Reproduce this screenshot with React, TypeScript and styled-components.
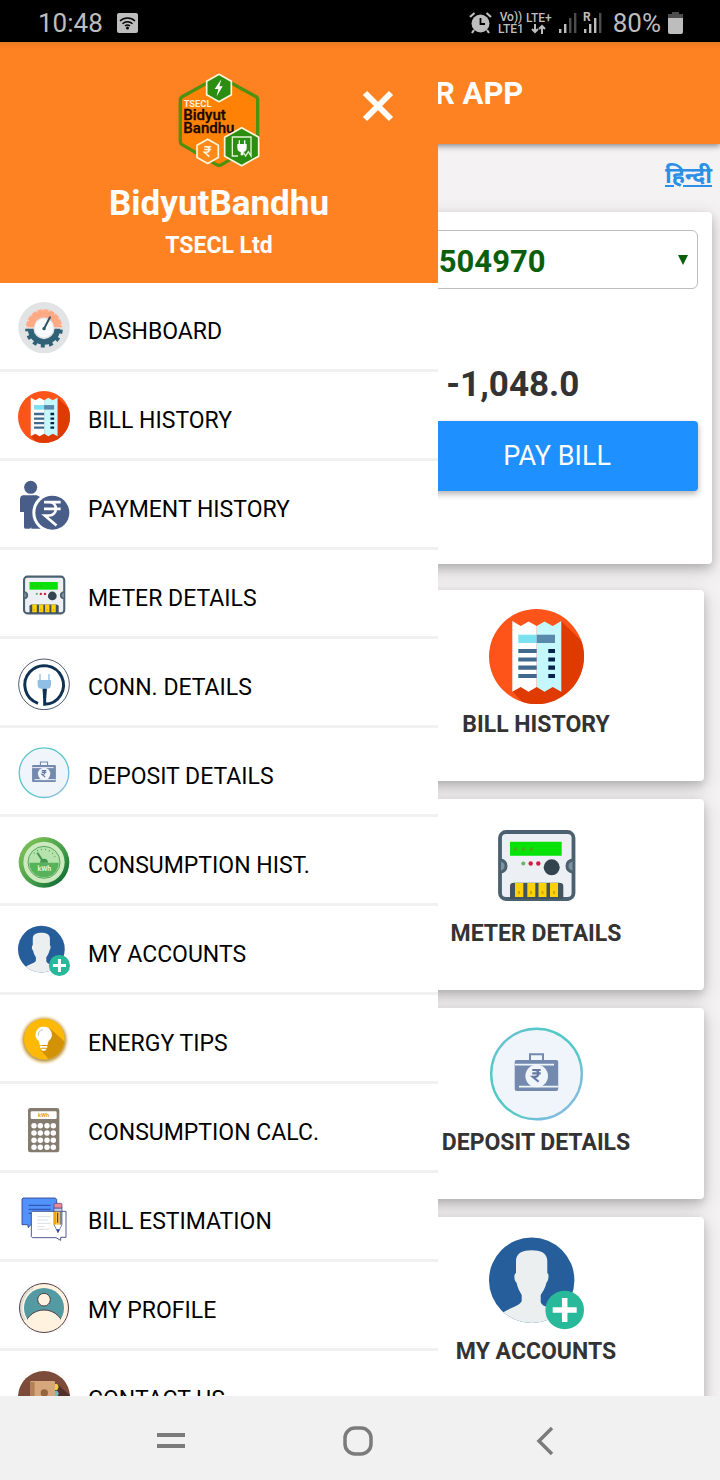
import React from 'react';
import styled, { createGlobalStyle } from 'styled-components';

const GlobalStyle = createGlobalStyle`
  * { box-sizing: border-box; }
  body { margin: 0; font-family: Roboto, 'Noto Sans', sans-serif; background: #f4f2f3; }
  button, select { font-family: inherit; }
`;

const ORANGE = '#ff8222';

/* ---------- layout ---------- */

const Screen = styled.div`
  display: flex;
  flex-direction: column;
  height: 100vh;
  overflow: hidden;
`;

const StatusBar = styled.header`
  display: flex;
  align-items: center;
  justify-content: space-between;
  flex: none;
  height: 42px;
  padding: 3px 37px 0 38px;
  background: #000;
  color: #bdbdbd;
  font-size: 26px;
  line-height: 30px;
`;

const StatusGroup = styled.div<{ $gap: number }>`
  display: flex;
  align-items: center;
  gap: ${(p) => p.$gap}px;
`;

const NetworkLabel = styled.div`
  display: flex;
  flex-direction: column;
  align-items: center;
  font-size: 12px;
  line-height: 12px;
  font-weight: 500;
`;

const Viewport = styled.div`
  position: relative;
  flex: 1;
  min-height: 0;
  overflow: hidden;
`;

const AppBar = styled.div`
  height: 102px;
  padding: 32px 0 0 435px;
  background: linear-gradient(#e87a22, ${ORANGE} 6px);
  box-shadow: 0 2px 6px rgba(0, 0, 0, 0.45);
`;

const AppTitle = styled.h1`
  margin: 0;
  color: #fff;
  font-size: 31px;
  line-height: 40px;
  font-weight: 700;
  white-space: nowrap;
`;

const LanguageBar = styled.div`
  display: flex;
  align-items: center;
  justify-content: flex-end;
  height: 68px;
  padding: 0 8px 4px;
`;

const LanguageLink = styled.a`
  color: #2b8fe8;
  font-size: 23px;
  line-height: 32px;
  font-weight: 700;
  text-decoration: underline;
`;

const Panel = styled.section`
  margin: 0 8px;
  padding: 18px 14px 73px;
  border-radius: 4px;
  background: #fff;
  box-shadow: 0 4px 8px rgba(0, 0, 0, 0.15), 0 6px 20px rgba(0, 0, 0, 0.19);
`;

const SelectBox = styled.label`
  display: grid;
  align-items: center;
  color: #0b5e0b;
  > * { grid-area: 1 / 1; }
  > svg { justify-self: end; margin-right: 10px; pointer-events: none; }
`;

const AccountSelect = styled.select`
  appearance: none;
  width: 100%;
  height: 59px;
  padding: 3px 30px 0 398px;
  border: 1px solid #bdbdbd;
  border-radius: 6px;
  background: #fff;
  color: inherit;
  font-size: 31px;
  font-weight: 700;
`;

const Due = styled.div`
  display: grid;
  grid-template-columns: 7fr 5fr;
  row-gap: 17px;
  margin-top: 75px;
  > * { grid-column: 2; }
`;

const Amount = styled.div`
  padding-left: 30px;
  color: #333;
  font-size: 35px;
  line-height: 42px;
  margin-bottom: -2px;
  font-weight: 700;
`;

const PayButton = styled.button`
  height: 70px;
  border: 0;
  border-radius: 4px;
  background: #1e90ff;
  color: #fff;
  font-size: 27px;
  box-shadow: 0 3px 6px rgba(0, 0, 0, 0.3);
`;

const Tiles = styled.div`
  display: grid;
  grid-template-columns: 1fr 1fr;
  gap: 18px 16px;
  margin: 26px 16px 0;
`;

const Tile = styled.a`
  display: flex;
  flex-direction: column;
  align-items: center;
  gap: 7px;
  grid-column: 2;
  height: 191px;
  padding-top: 19px;
  border-radius: 4px;
  background: #fff;
  color: #333;
  font-size: 23px;
  line-height: 28px;
  font-weight: 700;
  text-decoration: none;
  box-shadow: 0 4px 8px rgba(0, 0, 0, 0.15), 0 6px 20px rgba(0, 0, 0, 0.19);
`;

const Drawer = styled.aside`
  position: absolute;
  inset: 0 auto 0 0;
  width: min(438px, 85%);
  overflow: hidden;
  background: #fff;
`;

const DrawerHeader = styled.div`
  display: grid;
  grid-template-columns: 1fr auto 1fr;
  justify-items: center;
  align-content: start;
  height: 241px;
  padding: 31px 0 0;
  background: linear-gradient(#e87a22, ${ORANGE} 6px);
  color: #fff;
  > svg { grid-column: 2; }
`;

const CloseButton = styled.button`
  display: grid;
  place-items: center;
  justify-self: end;
  align-self: start;
  width: 44px;
  height: 44px;
  margin: 11px 38px 0 0;
  padding: 0;
  border: 0;
  background: none;
  color: #fff;
`;

const Brand = styled.h2`
  grid-column: 1 / -1;
  margin: 16px 0 0;
  font-size: 35px;
  line-height: 40px;
  font-weight: 700;
`;

const Company = styled.p`
  grid-column: 1 / -1;
  margin: 8px 0 0;
  font-size: 23px;
  line-height: 28px;
  font-weight: 700;
`;

const MenuItem = styled.a`
  display: flex;
  align-items: center;
  gap: 18px;
  height: 89px;
  padding: 4px 18px 0;
  border-bottom: 3px solid #f1f1f1;
  color: #000;
  font-size: 23px;
  line-height: 28px;
  text-decoration: none;
  white-space: nowrap;
  > span { padding-top: 8px; }
  > svg { flex: none; }
`;

const NavBar = styled.nav`
  display: grid;
  grid-template-columns: repeat(3, 1fr);
  flex: none;
  height: 84px;
  padding: 6px 81px 0 77px;
  background: #f1f1f1;
`;

const NavButton = styled.button`
  display: grid;
  place-items: center;
  padding: 0;
  border: 0;
  background: none;
  color: #7b7b7b;
`;

/* ---------- icons ---------- */

type IconProps = { size?: number };

const Rupee = ({ x, y, s, w, color }: { x: number; y: number; s: number; w: number; color: string }) => (
  <path
    transform={`translate(${x} ${y}) scale(${s})`}
    d="M-10 -13H10M-10 -5H10M-10 -13H-4C7 -13 7 3 -4 3H-9L5 15"
    fill="none" stroke={color} strokeWidth={w}
  />
);

const BillIcon = ({ size = 52 }: IconProps) => (
  <svg width={size} height={size} viewBox="0 0 95 95" aria-hidden="true">
    <clipPath id={`bill${size}`}><circle cx="47.5" cy="47.5" r="47.5" /></clipPath>
    <g clipPath={`url(#bill${size})`}>
      <path fill="#ff5419" d="M0 0H95V95H0z" />
      <path fill="#df3a00" d="M72 12L100 39V100H40L23 82z" />
    </g>
    <path fill="#fff" d="M23.3 82.7V12L31.7 17L39.5 12.5L47.7 17V78L39.5 82.7L31.7 78z" />
    <path fill="#c4f8fd" d="M47.7 17L55.5 12.5L63.7 17L72.3 12V82.7L63.7 78L55.5 82.7L47.7 78z" />
    <path fill="#7be0ef" d="M29.3 25.7H47.7V34H29.3z" />
    <path fill="#5989ad" d="M47.7 25.7H66V34H47.7z" />
    <path stroke="#41698f" strokeWidth="4.2" d="M29.3 42H47.7M29.3 50.5H47.7M29.3 58.7H47.7M29.3 67H47.7" />
    <path stroke="#05234a" strokeWidth="4.2" d="M59.3 42H66M59.3 50.5H66M59.3 58.7H66M59.3 67H66" />
  </svg>
);

const MeterIcon = ({ size = 52 }: IconProps) => (
  <svg width={size} height={size} viewBox="0 0 95 95" aria-hidden="true">
    <rect x="11" y="14" width="73.5" height="67" rx="6" fill="#eceff3" stroke="#4b616f" strokeWidth="3.8" />
    <path d="M12 42C16 43 17 45 17 48S16 53 12 54M83.5 42C79 43 78 45 78 48S79 53 83.5 54" fill="#7d93a0" stroke="#4b616f" strokeWidth="3" />
    <path fill="#08e208" d="M21 23.7H72.7V37.7H21z" />
    <path stroke="#3fae20" strokeWidth="3" strokeDasharray="3 5" d="M25 31H46" />
    <circle cx="34.3" cy="45.5" r="2" fill="#62b866" />
    <circle cx="41.7" cy="45.5" r="2.2" fill="#cf1f45" />
    <circle cx="49.3" cy="45.5" r="2.2" fill="#cf1f45" />
    <circle cx="62.7" cy="49.3" r="8" fill="#33444f" />
    <path fill="#42535f" d="M21 81V68Q21 64.7 25 64.7H70Q74.3 64.7 74.3 68V81z" />
    <path fill="#fdd107" d="M26 65H34.3V79H26zM38.3 65H46.3V79H38.3zM49.5 65H57.5V79H49.5zM61 65H69V79H61z" />
    <path stroke="#d9a400" strokeWidth="2" d="M30 73V76M42 73V76M53.5 73V76M65 73V76" />
  </svg>
);

const DepositIcon = ({ size = 52 }: IconProps) => (
  <svg width={size} height={size} viewBox="0 0 95 95" aria-hidden="true">
    <linearGradient id={`ring${size}`} x1="0" y1="0" x2="1" y2="1">
      <stop offset="0" stopColor="#80b8dc" />
      <stop offset=".25" stopColor="#55c8c8" />
      <stop offset=".6" stopColor="#55c8c8" />
      <stop offset=".85" stopColor="#82bce0" />
      <stop offset="1" stopColor="#8ae2df" />
    </linearGradient>
    <circle cx="47.5" cy="47" r="45.3" fill="#f0f5fb" stroke={`url(#ring${size})`} strokeWidth="2.4" />
    <path d="M41 34V27.3H54V34" fill="none" stroke="#7389ae" strokeWidth="2" />
    <rect x="25.7" y="33" width="43.5" height="31" rx="2" fill="#7389ae" />
    <path d="M26 37.7H65M30 59.7H69" stroke="#f0f5fb" strokeWidth="1.8" />
    <circle cx="47.7" cy="49" r="11.3" fill="#f0f5fb" />
    <Rupee x={47.5} y={48.5} s={0.42} w={5} color="#647aa3" />
  </svg>
);

const AccountsIcon = ({ size = 52 }: IconProps) => (
  <svg width={size} height={size} viewBox="0 0 95 95" aria-hidden="true">
    <clipPath id={`acc${size}`}><circle cx="42.7" cy="44.2" r="42.7" /></clipPath>
    <g clipPath={`url(#acc${size})`}>
      <path fill="#255e9a" d="M0 0H95V95H0z" />
      <path fill="#ebeff0" d="M27 37V25C27 17 34 14.3 42.7 14.3S58.3 17 58.3 25V37C60.5 38 59.5 45 57.5 46.5C56.5 52 53.5 56 51.7 59V66C53 71 62 72 71 77L66 92H16L13 77C22 71 31 70 32.7 65V59C31 56 28.5 52 27.5 46.5C25 45 24.5 38 27 37z" />
    </g>
    <circle cx="75.7" cy="74" r="19.3" fill="#27b999" />
    <path stroke="#fff" strokeWidth="5.5" d="M63.7 74H87.7M75.7 62V86" />
  </svg>
);

const DashboardIcon = () => (
  <svg width="52" height="52" viewBox="0 0 156 156" aria-hidden="true">
    <circle cx="78" cy="77" r="77" fill="#e2e3e4" />
    <path d="M36 76A42 42 0 0 1 120 76" fill="none" stroke="#ffaa84" strokeWidth="24" />
    <path d="M26 76A52 52 0 0 1 130 76" fill="none" stroke="#ffd9c6" strokeWidth="5" strokeDasharray="4 15" />
    <path d="M38 80A40 40 0 0 0 118 80" fill="none" stroke="#2f6177" strokeWidth="17" />
    <path d="M27 80A51 51 0 0 0 129 80" fill="none" stroke="#2f6177" strokeWidth="11" strokeDasharray="12 12.7" strokeDashoffset="4" />
    <circle cx="78" cy="78" r="28" fill="#f7fbfd" />
    <path d="M78 80L96 46" stroke="#2f5668" strokeWidth="6" strokeLinecap="round" />
    <circle cx="78" cy="80" r="5" fill="#2f5668" />
  </svg>
);

const PaymentIcon = () => (
  <svg width="52" height="52" viewBox="0 0 156 156" aria-hidden="true">
    <circle cx="38" cy="22" r="19.5" fill="#485d87" />
    <path fill="#485d87" d="M14 46H56Q66 48 68 56V146H40V142Q36 148 30 146Q18 148 18 142V96H6V56Q7 47 14 46z" />
    <circle cx="103" cy="98" r="60" fill="#fff" />
    <circle cx="103" cy="98" r="51" fill="#485d87" />
    <Rupee x={103} y={99} s={2.5} w={3.2} color="#fff" />
  </svg>
);

const ConnectionIcon = () => (
  <svg width="52" height="52" viewBox="0 0 156 156" aria-hidden="true">
    <circle cx="78" cy="79" r="76" fill="#fff" stroke="#26384c" strokeWidth="2.5" />
    <path d="M60 136A58 58 0 1 1 80 139V95" fill="none" stroke="#0f3152" strokeWidth="9" />
    <path d="M75 92H85L83 120H77z" fill="#0f3152" stroke="#0f3152" strokeWidth="3" />
    <path d="M66 48V68M93 48V68" stroke="#a9cdea" strokeWidth="5" />
    <path d="M59 66H99V80Q99 92 88 92H70Q59 92 59 80z" fill="#8fbfe6" />
  </svg>
);

const ConsumptionIcon = () => (
  <svg width="52" height="52" viewBox="0 0 156 156" aria-hidden="true">
    <linearGradient id="dial" x1="0" y1="0" x2="1" y2="1">
      <stop offset=".2" stopColor="#74bb55" />
      <stop offset=".6" stopColor="#3f9a48" />
      <stop offset="1" stopColor="#00592c" />
    </linearGradient>
    <circle cx="78" cy="79" r="76" fill="url(#dial)" />
    <circle cx="78" cy="79" r="62" fill="#cdeabf" />
    <circle cx="78" cy="79" r="48" fill="#b6e2ac" stroke="#58a65f" strokeWidth="3" />
    <path d="M34 80H122A44 44 0 0 1 34 80z" fill="#58b25c" />
    <path d="M76 78L58 50" stroke="#3e9850" strokeWidth="6" />
    <path d="M66 80A12 12 0 0 1 90 80z" fill="#3e9850" />
    <path d="M48 52A38 38 0 0 1 112 66" fill="none" stroke="#58a65f" strokeWidth="4" strokeDasharray="3 9" />
    <text x="79" y="104" textAnchor="middle" fontSize="21" fontWeight="700" fill="#dff4d8">kWh</text>
  </svg>
);

const TipsIcon = () => (
  <svg width="52" height="52" viewBox="0 0 156 156" aria-hidden="true">
    <radialGradient id="glow">
      <stop offset=".82" stopColor="#b58a2c" stopOpacity=".75" />
      <stop offset="1" stopColor="#ffe9b0" stopOpacity="0" />
    </radialGradient>
    <clipPath id="tip"><circle cx="79" cy="75" r="61" /></clipPath>
    <circle cx="79" cy="78" r="76" fill="url(#glow)" />
    <g clipPath="url(#tip)">
      <path fill="#fdb906" d="M0 0H156V156H0z" />
      <path fill="#d39205" d="M95 42L156 98V156H110L68 108z" />
    </g>
    <path fill="#fff" d="M77 38A24 24 0 0 1 92 81Q89 85 89 93H65Q65 85 62 81A24 24 0 0 1 77 38zM66 96H88V101H66zM68 104H86L81 110H73z" />
    <path d="M61 64A17 17 0 0 1 74 47" fill="none" stroke="#b9b9a9" strokeWidth="3" />
  </svg>
);

const CalculatorIcon = () => (
  <svg width="52" height="52" viewBox="0 0 156 156" aria-hidden="true">
    <rect x="30" y="15" width="94" height="133" rx="7" fill="#857c70" />
    <rect x="38" y="25" width="78" height="23" rx="4" fill="#fff" />
    <text x="77" y="43" textAnchor="middle" fontSize="17" fontWeight="700" fill="#e5a020">kWh</text>
    {[68, 90, 112, 133].map((y) =>
      [48, 67, 87, 106].map((x) => <circle key={`${x}-${y}`} cx={x} cy={y} r="8.2" fill="#fff" />)
    )}
  </svg>
);

const EstimateIcon = () => (
  <svg width="52" height="52" viewBox="0 0 156 156" aria-hidden="true">
    <path d="M15 18H112L116 22V98H38L31 107L29 98H12V21z" fill="#5292fb" stroke="#2b408d" strokeWidth="2.5" />
    <path d="M32 40H98M32 52H98M32 64H60" stroke="#263e91" strokeWidth="2.5" />
    <path d="M43 58H144V136H128V145L114 137H43L40 134V61z" fill="#fff" stroke="#2f3a80" strokeWidth="2.5" />
    <path d="M58 74H98M58 84H90M58 94H98M58 104H80M58 112H94" stroke="#d4d6de" strokeWidth="2.5" />
    <path d="M108 58H132V98L120 122L108 98z" fill="#fff" stroke="#3b4380" strokeWidth="2" />
    <path d="M108 58H116V98H108z" fill="#f6a30a" />
    <path d="M116 58H125V98H116z" fill="#f9c24b" />
    <path d="M125 58H132V98H125z" fill="#8a8374" />
    <path d="M119 62V92" stroke="#352d35" strokeWidth="3" />
    <path d="M108 48H132V58H108z" fill="#c3cfe9" stroke="#3b4380" strokeWidth="2" />
    <path d="M108 48V37Q108 34 112 34H128Q132 34 132 37V48z" fill="#ee8795" stroke="#3b4380" strokeWidth="2" />
    <path d="M115 112H125L120 122z" fill="#273a94" />
  </svg>
);

const ProfileIcon = () => (
  <svg width="52" height="52" viewBox="0 0 156 156" aria-hidden="true">
    <clipPath id="face"><circle cx="78" cy="81" r="60" /></clipPath>
    <circle cx="78" cy="81" r="73.5" fill="#fff3df" />
    <path d="M20 118A69 69 0 0 1 46 20" fill="none" stroke="#dedfd8" strokeWidth="8" />
    <circle cx="78" cy="81" r="73.5" fill="none" stroke="#523d45" strokeWidth="3" />
    <g clipPath="url(#face)">
      <path d="M0 0H156V116H0z" fill="#539aa3" />
      <ellipse cx="78" cy="143" rx="59" ry="56" fill="#fff3df" stroke="#523d45" strokeWidth="3" />
    </g>
    <circle cx="78" cy="56" r="19" fill="#fff3df" stroke="#523d45" strokeWidth="3" />
  </svg>
);

const ContactIcon = () => (
  <svg width="52" height="52" viewBox="0 0 156 156" aria-hidden="true">
    <clipPath id="book"><circle cx="78" cy="81" r="78" /></clipPath>
    <g clipPath="url(#book)">
      <path fill="#7d4b39" d="M0 0H156V160H0z" />
      <path fill="#54302a" d="M118 42L156 76V160H60z" />
      <path fill="#f1cc49" d="M106 42H118L122 50L118 60H106z" />
      <path fill="#72b9bd" d="M106 62H118L122 70L118 82H106z" />
      <rect x="36" y="33" width="75" height="98" rx="4" fill="#d5a77a" />
      <path fill="#b38057" d="M36 36H50V128H36z" />
      <circle cx="79" cy="69" r="11" fill="#95653f" />
      <path fill="#95653f" d="M60 102Q62 82 79 82T98 102z" />
    </g>
  </svg>
);

const hex = (cx: number, cy: number, w: number, h: number) =>
  `M${cx} ${cy - h / 2}L${cx + w / 2} ${cy - h / 4}V${cy + h / 4}L${cx} ${cy + h / 2}L${cx - w / 2} ${cy + h / 4}V${cy - h / 4}z`;

const Logo = () => (
  <svg width="82" height="95" viewBox="0 0 246 285" role="img" aria-label="TSECL Bidyut Bandhu">
    <path d="M123 10L236 72Q239 75 239 80V206Q239 211 235 214L132 274Q123 280 114 274L11 214Q7 211 7 206V80Q7 75 11 72z" fill="#ff8206" stroke="#4e9010" strokeWidth="10" strokeLinejoin="round" />
    <g fontFamily="Roboto, sans-serif">
      <text x="17" y="102" fontSize="28" fontWeight="700" fill="#fff0dc">TSECL</text>
      <text x="16" y="140" fontSize="45" fontWeight="500" fill="#190700" stroke="#190700">Bidyut</text>
      <text x="16" y="179" fontSize="45" fontWeight="500" fill="#190700" stroke="#190700">Bandhu</text>
    </g>
    <g strokeLinejoin="round" stroke="#fff6dc">
      <path d={hex(123, 45, 74, 82)} fill="#2c8e10" strokeWidth="5" />
      <path d={hex(89, 235, 64, 73)} fill="#ff8a1c" strokeWidth="5" />
      <path d={hex(191, 221, 102, 114)} fill="#2c8e10" strokeWidth="5" />
    </g>
    <path d="M130 19L110 48H121L116 70L134 40H124z" fill="#fff" />
    <Rupee x={89} y={235} s={1.05} w={4.5} color="#fff6dc" />
    <path d="M180 249H163V192H219V249L211 236L203 249L196 238" fill="none" stroke="#e4f4d6" strokeWidth="4" />
    <path d="M184 202V216M200 202V216" stroke="#fff" strokeWidth="4" />
    <path d="M178 213H206V224Q206 235 196 237V247H188V237Q178 235 178 224z" fill="#fff" />
  </svg>
);

const WifiBadge = () => (
  <svg width="21" height="20" viewBox="0 0 21 20" aria-hidden="true">
    <rect width="21" height="20" rx="2" fill="#bdbdbd" />
    <path d="M3 8A11 11 0 0 1 18 8M5.5 10.7A7.5 7.5 0 0 1 15.5 10.7M8 13A4 4 0 0 1 13 13" fill="none" stroke="#000" strokeWidth="1.5" />
    <circle cx="10.5" cy="15" r="1.5" />
  </svg>
);

const AlarmIcon = () => (
  <svg width="23" height="22" viewBox="0 0 23 22" aria-hidden="true">
    <path d="M1 5L5.5 1M22 5L17.5 1M5 18L3 21M18 18L20 21" stroke="#bdbdbd" strokeWidth="2.2" />
    <circle cx="11.5" cy="11.5" r="9" fill="#bdbdbd" />
    <path d="M11.5 6V12H16" fill="none" stroke="#000" strokeWidth="1.8" />
  </svg>
);

const DataArrows = () => (
  <svg width="15" height="10" viewBox="0 0 15 10" aria-hidden="true">
    <path d="M4 0V8M1 5L4 8L7 5M11 10V2M8 5L11 2L14 5" fill="none" stroke="#bdbdbd" strokeWidth="2" />
  </svg>
);

const Signal = ({ full, roaming }: { full: number; roaming?: boolean }) => (
  <svg width="19" height="24" viewBox="0 0 19 24" aria-hidden="true">
    {[4, 9, 15, 20].map((h, i) => (
      <rect key={h} x={1 + i * 5} y={22 - h} width="2.4" height={h} fill={i < full ? '#bdbdbd' : '#4d4d4d'} />
    ))}
    {roaming && <text x="0" y="10" fontSize="12" fontWeight="700" fill="#bdbdbd">R</text>}
  </svg>
);

const BatteryIcon = () => (
  <svg width="15" height="22" viewBox="0 0 15 22" aria-hidden="true">
    <path fill="#4d4d4d" d="M4 0H11V2H15V7H0V2H4z" />
    <path fill="#bdbdbd" d="M0 6H15V20Q15 22 13 22H2Q0 22 0 20z" />
  </svg>
);

/* ---------- data ---------- */

const menu = [
  { label: 'DASHBOARD', icon: <DashboardIcon /> },
  { label: 'BILL HISTORY', icon: <BillIcon /> },
  { label: 'PAYMENT HISTORY', icon: <PaymentIcon /> },
  { label: 'METER DETAILS', icon: <MeterIcon /> },
  { label: 'CONN. DETAILS', icon: <ConnectionIcon /> },
  { label: 'DEPOSIT DETAILS', icon: <DepositIcon /> },
  { label: 'CONSUMPTION HIST.', icon: <ConsumptionIcon /> },
  { label: 'MY ACCOUNTS', icon: <AccountsIcon /> },
  { label: 'ENERGY TIPS', icon: <TipsIcon /> },
  { label: 'CONSUMPTION CALC.', icon: <CalculatorIcon /> },
  { label: 'BILL ESTIMATION', icon: <EstimateIcon /> },
  { label: 'MY PROFILE', icon: <ProfileIcon /> },
  { label: 'CONTACT US', icon: <ContactIcon /> },
];

const tiles = [
  { label: 'BILL HISTORY', icon: <BillIcon size={95} /> },
  { label: 'METER DETAILS', icon: <MeterIcon size={95} /> },
  { label: 'DEPOSIT DETAILS', icon: <DepositIcon size={95} /> },
  { label: 'MY ACCOUNTS', icon: <AccountsIcon size={95} /> },
];

export default function App() {
  return (
    <Screen>
      <GlobalStyle />
      <StatusBar>
        <StatusGroup $gap={14}>
          <span>10:48</span>
          <WifiBadge />
        </StatusGroup>
        <StatusGroup $gap={11}>
          <StatusGroup $gap={6}>
            <AlarmIcon />
            <StatusGroup $gap={2}>
              <NetworkLabel><span>Vo))</span><span>LTE1</span></NetworkLabel>
              <NetworkLabel><span>LTE+</span><DataArrows /></NetworkLabel>
            </StatusGroup>
            <Signal full={2} />
            <Signal full={3} roaming />
          </StatusGroup>
          <StatusGroup $gap={7}>
            <span>80%</span>
            <BatteryIcon />
          </StatusGroup>
        </StatusGroup>
      </StatusBar>

      <Viewport>
        <main>
          <AppBar><AppTitle>R APP</AppTitle></AppBar>
          <LanguageBar><LanguageLink href="#hindi" lang="hi">हिन्दी</LanguageLink></LanguageBar>
          <Panel>
            <SelectBox>
              <AccountSelect aria-label="Account" defaultValue="0504970">
                <option value="0504970">0504970</option>
              </AccountSelect>
              <svg width="10" height="10" viewBox="0 0 10 10" aria-hidden="true"><path fill="currentColor" d="M0 0H10L5 10z" /></svg>
            </SelectBox>
            <Due>
              <Amount>-1,048.0</Amount>
              <PayButton type="button">PAY BILL</PayButton>
            </Due>
          </Panel>
          <Tiles>
            {tiles.map((t) => (
              <Tile key={t.label} href="#tile">{t.icon}<span>{t.label}</span></Tile>
            ))}
          </Tiles>
        </main>

        <Drawer>
          <DrawerHeader>
            <Logo />
            <CloseButton type="button" aria-label="Close menu">
              <svg width="32" height="32" viewBox="0 0 32 32" aria-hidden="true">
                <path d="M3 3L29 29M29 3L3 29" stroke="currentColor" strokeWidth="6" />
              </svg>
            </CloseButton>
            <Brand>BidyutBandhu</Brand>
            <Company>TSECL Ltd</Company>
          </DrawerHeader>
          <nav aria-label="Menu">
            {menu.map((m) => (
              <MenuItem key={m.label} href="#menu">{m.icon}<span>{m.label}</span></MenuItem>
            ))}
          </nav>
        </Drawer>
      </Viewport>

      <NavBar aria-label="System">
        <NavButton type="button" aria-label="Recent apps">
          <svg width="28" height="16" viewBox="0 0 28 16"><path d="M0 2H28M0 13H28" stroke="currentColor" strokeWidth="4" /></svg>
        </NavButton>
        <NavButton type="button" aria-label="Home">
          <svg width="30" height="30" viewBox="0 0 30 30"><rect x="2" y="2" width="26" height="26" rx="10" fill="none" stroke="currentColor" strokeWidth="3.5" /></svg>
        </NavButton>
        <NavButton type="button" aria-label="Back">
          <svg width="18" height="30" viewBox="0 0 18 30"><path d="M16 2L3 15L16 28" fill="none" stroke="currentColor" strokeWidth="3.5" /></svg>
        </NavButton>
      </NavBar>
    </Screen>
  );
}
